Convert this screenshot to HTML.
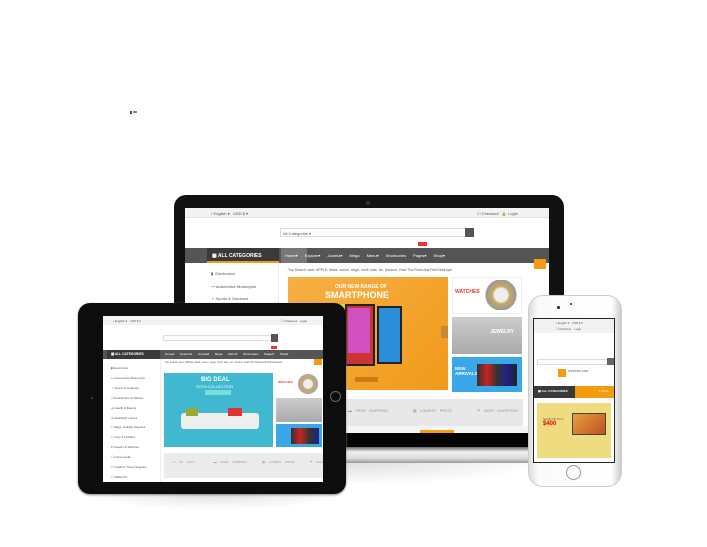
<!DOCTYPE html>
<html><head><meta charset="utf-8"><style>
*{margin:0;padding:0;box-sizing:border-box}
body{width:707px;height:547px;background:#fff;position:relative;overflow:hidden;font-family:"Liberation Sans",sans-serif;font-size:4px;color:#555}
.a{position:absolute}
.t{white-space:nowrap}
</style></head><body>
<div class="a" style="left:130px;top:111px;width:2px;height:3px;background:#555"></div>
<div class="a" style="left:133px;top:111px;width:4px;height:2px;background:#888"></div>

<div class="a" style="left:150px;top:455px;width:400px;height:30px;background:radial-gradient(ellipse at 50% 20%,#ddd,rgba(255,255,255,0) 70%)"></div>
<div class="a" style="left:80px;top:490px;width:270px;height:20px;background:radial-gradient(ellipse at 50% 10%,#ddd,rgba(255,255,255,0) 70%)"></div>

<!-- LAPTOP -->
<div class="a" style="left:174px;top:195px;width:390px;height:254px;background:#111;border-radius:12px 12px 0 0"></div>
<div class="a" style="left:366px;top:201px;width:4px;height:4px;border-radius:50%;background:#334"></div>
<div class="a" style="left:150px;top:447px;width:400px;height:16px;background:linear-gradient(#666,#eee 30%,#ddd 70%,#999);border-radius:0 0 20px 20px"></div>
<div class="a" style="left:185px;top:208px;width:364px;height:225px;background:#fff;overflow:hidden">
  <div class="a" style="left:0;top:0;width:364px;height:10px;background:#f2f2f2;border-bottom:1px solid #e4e4e4"></div>
  <div class="a t" style="left:26px;top:3px">▪ English ▾ &nbsp; USD $ ▾</div>
  <div class="a t" style="left:292px;top:3px">☐ Checkout &nbsp; 🔒 Login</div>
  <div class="a" style="left:95px;top:20px;width:190px;height:9px;border:1px solid #ddd"></div>
  <div class="a t" style="left:98px;top:23px">All Categories ▾</div>
  <div class="a" style="left:280px;top:20px;width:9px;height:9px;background:#555"></div>
  <div class="a" style="left:233px;top:34px;width:9px;height:4px;background:#e33"></div>
  <div class="a" style="left:0;top:40px;width:364px;height:15px;background:#555"></div>
  <div class="a" style="left:22px;top:40px;width:72px;height:15px;background:#3a3a3a;border-bottom:2px solid #f39c12"></div>
  <div class="a t" style="left:27px;top:45px;color:#fff;font-weight:bold;font-size:5px">▦ ALL CATEGORIES</div>
  <div class="a" style="left:96px;top:40px;width:26px;height:15px;background:#777"></div>
  <div class="a t" style="left:100px;top:45px;color:#fff;word-spacing:6px">Home▾ Explore▾ Joomla▾ Mega&nbsp;Menu▾ Shortcodes Pages▾ Shop▾</div>
  <div class="a" style="left:349px;top:51px;width:12px;height:10px;background:#f39c12"></div>
  <div class="a" style="left:22px;top:55px;width:72px;height:170px;background:#fff;border-right:1px solid #eee"></div>
  <div class="a t" style="left:26px;top:60px;line-height:12.5px">▮ &nbsp;Electronics<br>⊶ Automotive Motorcycle<br>✧ Sports &amp; Outdoors</div>
  <div class="a t" style="left:103px;top:60px;font-size:3.5px">Top Search: acer, APPLE, black, canon, clogs, confi, kate, lcc, product, Zolof The Rock And Roll Destroyer</div>
  <div class="a" style="left:103px;top:69px;width:160px;height:113px;background:linear-gradient(135deg,#f7b046,#f09a1a)"></div>
  <div class="a t" style="left:150px;top:76px;color:#fff;font-weight:bold;font-size:5px">OUR NEW RANGE OF</div>
  <div class="a t" style="left:140px;top:82px;color:#fff;font-weight:bold;font-size:9px">SMARTPHONE</div>
  <div class="a" style="left:160px;top:96px;width:30px;height:62px;background:#c33;border:2px solid #222"></div>
  <div class="a" style="left:163px;top:100px;width:22px;height:45px;background:#d050c0"></div>
  <div class="a" style="left:192px;top:98px;width:25px;height:58px;background:#2a8fd8;border:2px solid #222"></div>
  <div class="a" style="left:150px;top:96px;width:10px;height:50px;background:#dd3"></div>
  <div class="a" style="left:170px;top:169px;width:23px;height:5px;background:#c97d10"></div>
  <div class="a" style="left:256px;top:118px;width:7px;height:12px;background:#c68a30"></div>
  <div class="a" style="left:267px;top:69px;width:70px;height:37px;background:#fff;border:1px solid #eee"></div>
  <div class="a t" style="left:270px;top:81px;color:#e33;font-weight:bold;font-size:5px">WATCHES</div>
  <div class="a" style="left:300px;top:72px;width:32px;height:30px;background:radial-gradient(circle,#eee 30%,#c8a860 40%,#999 70%,#fff 72%)"></div>
  <div class="a" style="left:267px;top:109px;width:70px;height:37px;background:linear-gradient(#ccc,#aaa)"></div>
  <div class="a t" style="left:305px;top:121px;color:#fff;font-weight:bold;font-size:5px">JEWELRY</div>
  <div class="a" style="left:267px;top:149px;width:70px;height:35px;background:#3aa8e8"></div>
  <div class="a t" style="left:270px;top:158px;color:#fff;font-weight:bold;font-size:4.5px">NEW<br>ARRIVALS</div>
  <div class="a" style="left:292px;top:156px;width:40px;height:22px;background:linear-gradient(90deg,#333,#c22,#333,#228,#222)"></div>
  <div class="a" style="left:150px;top:191px;width:188px;height:27px;background:#e8e8e8"></div>
  <div class="a t" style="left:163px;top:200px;color:#999;font-size:4px;word-spacing:2px">▬ FREE SHIPPING &nbsp;&nbsp;&nbsp;&nbsp;&nbsp;&nbsp;&nbsp;▦ LOWEST PRICE &nbsp;&nbsp;&nbsp;&nbsp;&nbsp;&nbsp;&nbsp;☂ SAFE SHOPPING</div>
  <div class="a" style="left:0;top:218px;width:364px;height:7px;background:#f4f4f4"></div>
  <div class="a" style="left:235px;top:222px;width:34px;height:3px;background:#f39c12"></div>
</div>
<div class="a" style="left:185px;top:433px;width:364px;height:14px;background:#050505"></div>

<!-- TABLET -->
<div class="a" style="left:78px;top:303px;width:268px;height:191px;background:#0d0d0d;border-radius:12px;box-shadow:0 1px 2px #888"></div>
<div class="a" style="left:91px;top:397px;width:2px;height:2px;background:#335"></div>
<div class="a" style="left:330px;top:391px;width:11px;height:11px;border-radius:50%;border:1px solid #666"></div>
<div class="a" style="left:103px;top:316px;width:220px;height:166px;background:#fff;overflow:hidden">
  <div class="a" style="left:0;top:0;width:220px;height:9px;background:#f2f2f2"></div>
  <div class="a t" style="left:10px;top:3px;font-size:3px">▪ English ▾ &nbsp; USD $ ▾</div>
  <div class="a t" style="left:178px;top:3px;font-size:3px">☐ Checkout &nbsp; Login</div>
  <div class="a" style="left:60px;top:19px;width:110px;height:6px;border:1px solid #ddd"></div>
  <div class="a" style="left:168px;top:18px;width:7px;height:8px;background:#555"></div>
  <div class="a" style="left:168px;top:30px;width:6px;height:3px;background:#e33"></div>
  <div class="a" style="left:0;top:34px;width:220px;height:9px;background:#555"></div>
  <div class="a" style="left:4px;top:34px;width:53px;height:9px;background:#3a3a3a"></div>
  <div class="a t" style="left:8px;top:36px;color:#fff;font-weight:bold;font-size:3.3px">▦ ALL CATEGORIES</div>
  <div class="a t" style="left:62px;top:36px;color:#fff;font-size:3px;word-spacing:5px">Home▾ Explore▾ Joomla▾ Mega&nbsp;Menu▾ Shortcodes Pages▾ Shop▾</div>
  <div class="a" style="left:211px;top:43px;width:8px;height:6px;background:#f39c12"></div>
  <div class="a t" style="left:8px;top:48px;font-size:3px;line-height:9.9px">▮ Electronics<br>⊶ Automotive Motorcycle<br>✧ Sports &amp; Outdoors<br>▯ Smartphone &amp; Tablets<br>♙ Health &amp; Beauty<br>♙ Flashlight Lamps<br>☐ Bags, Holiday Supplies<br>☐ Toys &amp; Hobbies<br>♥ Jewelry &amp; Watches<br>☐ Home Audio<br>☐ Outdoor Travel Supplies<br>☐ Tablet PC</div>
  <div class="a" style="left:57px;top:43px;width:1px;height:123px;background:#eee"></div>
  <div class="a t" style="left:62px;top:45px;font-size:2.5px">Top Search: acer, APPLE, black, canon, clogs, confi, kate, lcc, product, Zolof The Rock And Roll Destroyer</div>
  <div class="a" style="left:61px;top:57px;width:109px;height:74px;background:#3fb8d0"></div>
  <div class="a t" style="left:98px;top:61px;color:#fff;font-weight:bold;font-size:6px">BIG DEAL</div>
  <div class="a t" style="left:93px;top:68px;color:#fff;font-size:4px">SOFA COLLECTION</div>
  <div class="a" style="left:102px;top:74px;width:26px;height:5px;background:#7dd"></div>
  <div class="a" style="left:78px;top:97px;width:78px;height:16px;background:#eee;border-radius:3px"></div>
  <div class="a" style="left:83px;top:92px;width:12px;height:8px;background:#9a3"></div>
  <div class="a" style="left:125px;top:92px;width:14px;height:8px;background:#d33"></div>
  <div class="a" style="left:173px;top:57px;width:46px;height:23px;background:#fff"></div>
  <div class="a t" style="left:175px;top:64px;color:#e33;font-size:3px;font-weight:bold">WATCHES</div>
  <div class="a" style="left:195px;top:58px;width:20px;height:20px;background:radial-gradient(circle,#eee 30%,#c8a860 40%,#aaa 70%,#fff 72%)"></div>
  <div class="a" style="left:173px;top:82px;width:46px;height:24px;background:linear-gradient(#ccc,#aaa)"></div>
  <div class="a" style="left:173px;top:108px;width:46px;height:23px;background:#3aa8e8"></div>
  <div class="a" style="left:188px;top:112px;width:28px;height:16px;background:linear-gradient(90deg,#333,#c22,#333,#228)"></div>
  <div class="a" style="left:61px;top:137px;width:159px;height:25px;background:#ebebeb"></div>
  <div class="a t" style="left:70px;top:144px;color:#999;font-size:3px;word-spacing:3px">♙ 30 DAYS &nbsp;&nbsp;&nbsp; ▬ FREE SHIPPING &nbsp;&nbsp; ▦ LOWEST PRICE &nbsp;&nbsp; ☂ SAFE SHOPPING</div>
</div>

<!-- PHONE -->
<div class="a" style="left:528px;top:295px;width:94px;height:192px;background:linear-gradient(90deg,#ddd,#fafafa 10%,#fff 90%,#ccc);border:1px solid #ccc;border-radius:15px"></div>
<div class="a" style="left:557px;top:306px;width:3px;height:3px;border-radius:50%;background:#222"></div>
<div class="a" style="left:570px;top:303px;width:2px;height:2px;border-radius:50%;background:#222"></div>
<div class="a" style="left:566px;top:465px;width:15px;height:15px;border-radius:50%;border:1px solid #999"></div>
<div class="a" style="left:533px;top:318px;width:82px;height:145px;background:#fff;border:1px solid #222;overflow:hidden">
  <div class="a" style="left:0;top:0;width:82px;height:14px;background:#f2f2f2"></div>
  <div class="a t" style="left:22px;top:2px;font-size:2.8px">▪ English ▾ &nbsp;&nbsp; USD $ ▾</div>
  <div class="a t" style="left:22px;top:8px;font-size:2.8px">☐ Checkout &nbsp;&nbsp; Login</div>
  <div class="a" style="left:3px;top:40px;width:71px;height:6px;border:1px solid #ddd"></div>
  <div class="a" style="left:73px;top:39px;width:7px;height:7px;background:#666"></div>
  <div class="a" style="left:24px;top:50px;width:8px;height:8px;background:#f39c12"></div>
  <div class="a t" style="left:34px;top:51px;font-size:2.5px">SHOPPING CART</div>
  <div class="a" style="left:0;top:67px;width:41px;height:12px;background:#3a3a3a"></div>
  <div class="a t" style="left:4px;top:70px;color:#fff;font-weight:bold;font-size:3px">▦ ALL CATEGORIES</div>
  <div class="a" style="left:41px;top:67px;width:41px;height:12px;background:#f39c12"></div>
  <div class="a t" style="left:65px;top:70px;color:#fff;font-size:3px">≡ Menu</div>
  <div class="a" style="left:3px;top:84px;width:74px;height:55px;background:#f0dc80"></div>
  <div class="a t" style="left:9px;top:98px;color:#555;font-size:3px">SAVE UP TO A</div>
  <div class="a t" style="left:9px;top:102px;color:#e00;font-weight:bold;font-size:6px">$400</div>
  <div class="a" style="left:38px;top:94px;width:34px;height:22px;background:linear-gradient(135deg,#e8a040,#c05020);border:1px solid #444"></div>
</div>
</body></html>
